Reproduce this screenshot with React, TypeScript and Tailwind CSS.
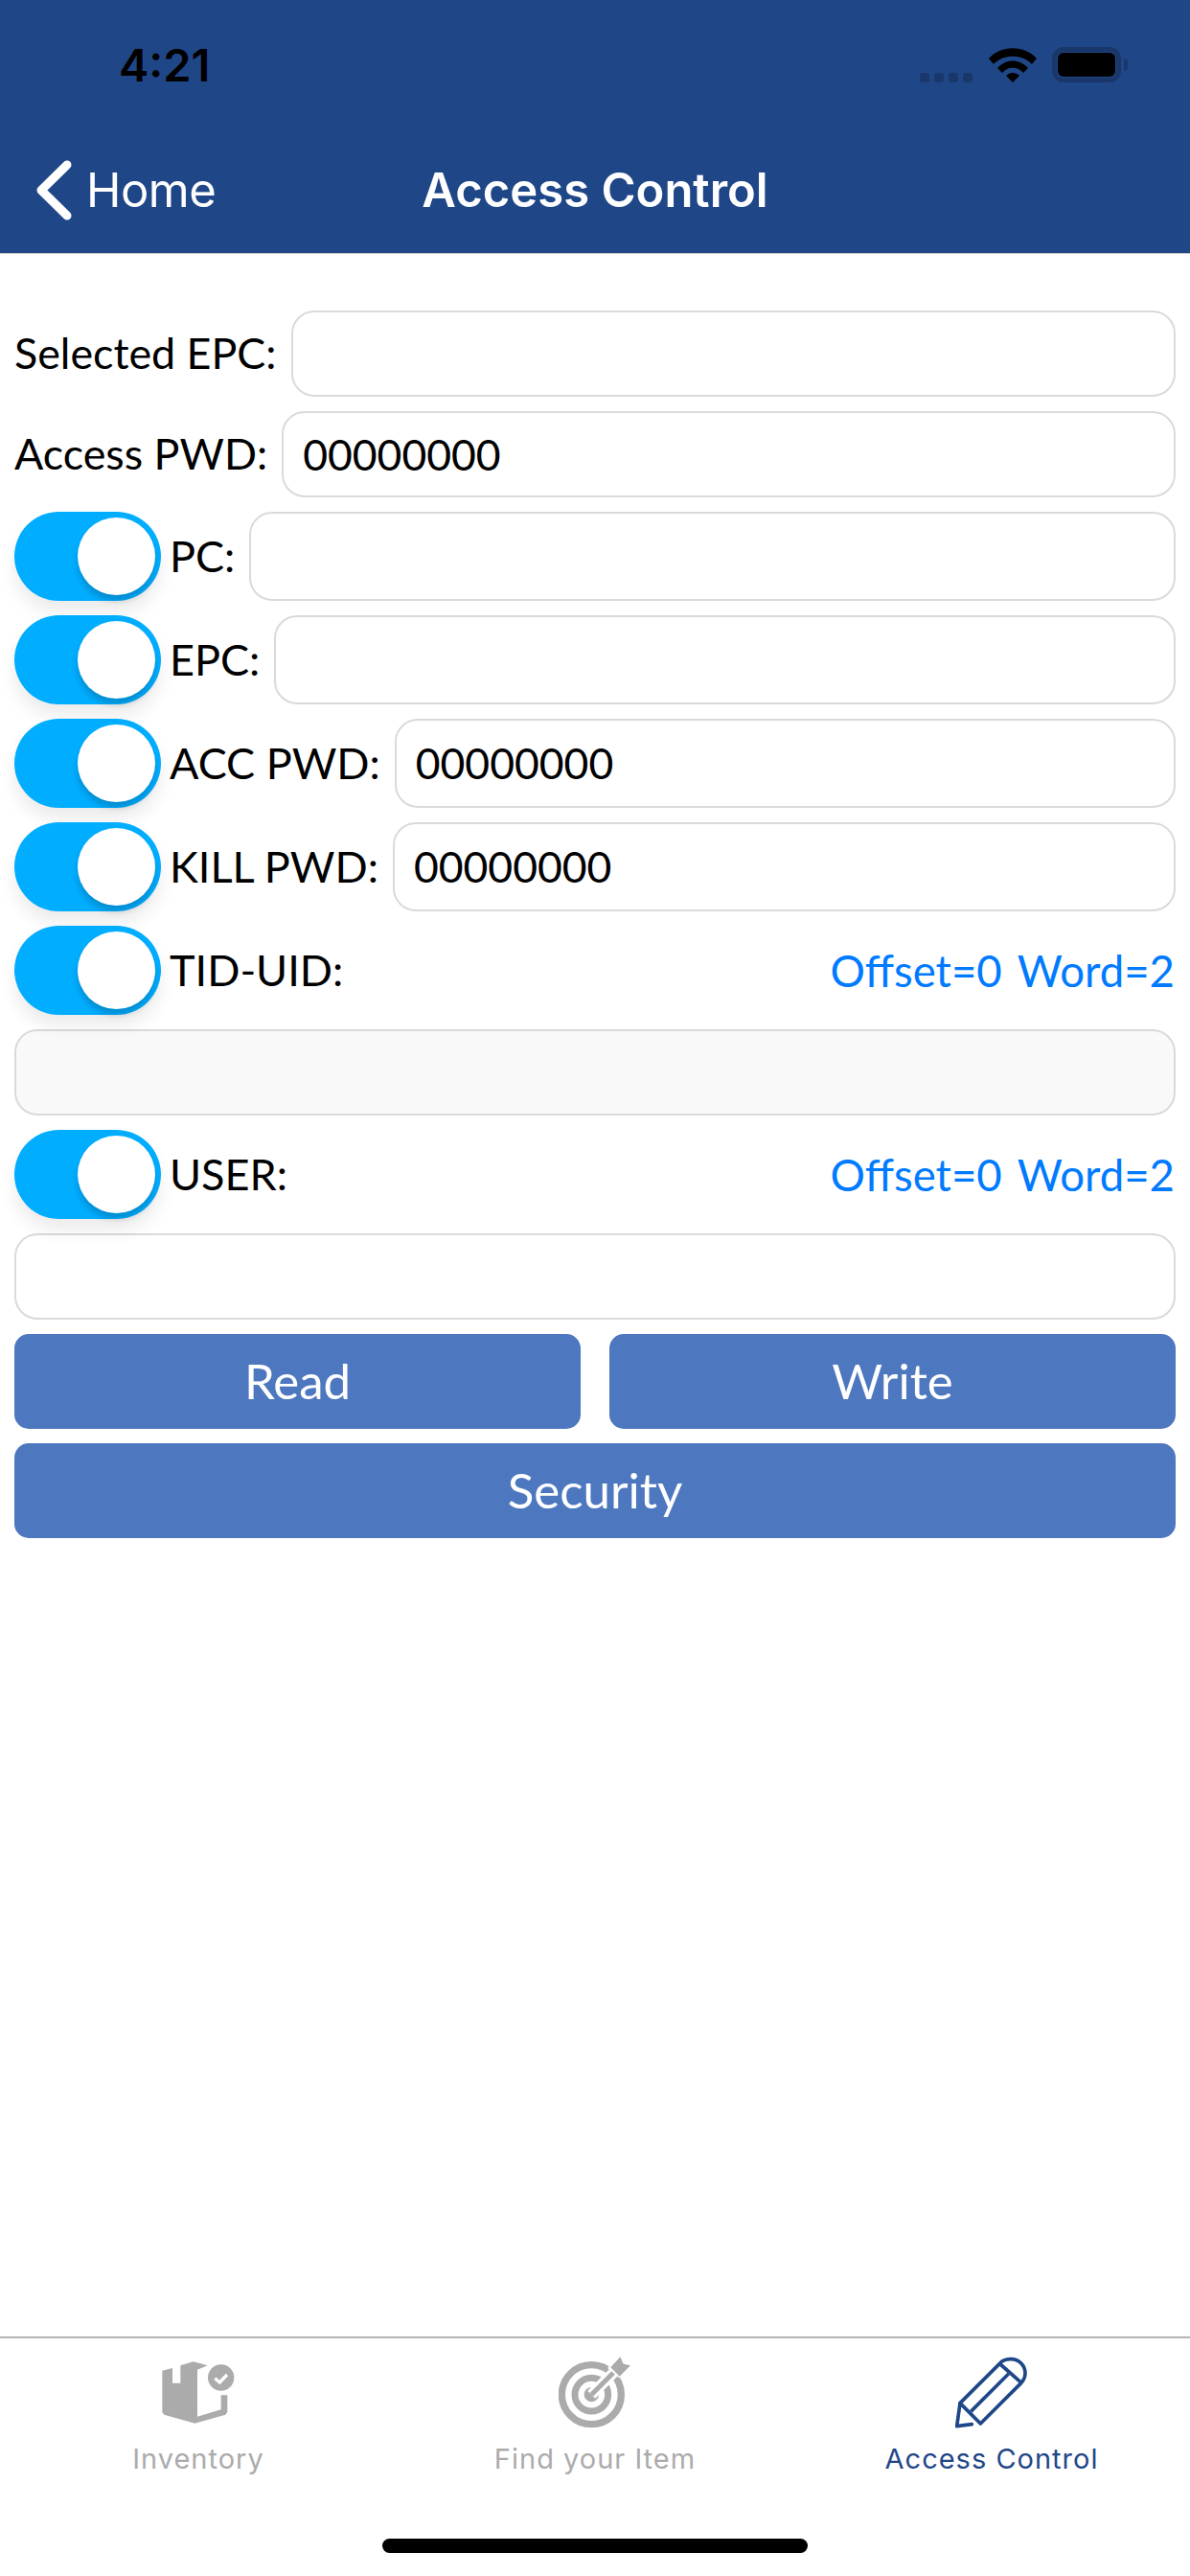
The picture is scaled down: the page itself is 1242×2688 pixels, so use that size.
const ui = '"Inter", "Liberation Sans", sans-serif';

function Toggle() {
  return (
    <div className="relative h-[93px] w-[153px] shrink-0 rounded-full bg-[#00adff] shadow-[0_12px_18px_rgba(0,0,0,0.08)]">
      <div className="absolute left-[66px] top-[6px] h-[81px] w-[81px] rounded-full bg-white shadow-[0_6px_6px_rgba(0,0,0,0.18)]" />
    </div>
  );
}

function Field({ value = "", disabled = false, tall = false }: { value?: string; disabled?: boolean; tall?: boolean }) {
  return (
    <input
      readOnly
      value={value}
      className={`${tall ? "h-[93px]" : "h-[90px]"} ${disabled ? "bg-[#f9f9f9]" : "bg-white"} w-full min-w-0 shrink-0 rounded-[24px] border-2 border-[#dadada] px-[20px] pb-[2px] text-[44.5px] text-black outline-none`}
    />
  );
}

function LabelRow({ label, value }: { label: string; value?: string }) {
  return (
    <div className="flex items-center">
      <span className="mr-[15px] shrink-0 pb-[2px] text-[44.8px] leading-none text-black">{label}</span>
      <div className="min-w-0 flex-1">
        <Field value={value} />
      </div>
    </div>
  );
}

function ToggleRow({ label, value }: { label: string; value?: string }) {
  return (
    <div className="flex items-center">
      <Toggle />
      <span className="ml-[9px] mr-[15px] shrink-0 text-[45px] leading-none text-black">{label}</span>
      <div className="min-w-0 flex-1">
        <Field value={value} tall />
      </div>
    </div>
  );
}

function OffsetRow({ label }: { label: string }) {
  return (
    <div className="flex items-center">
      <Toggle />
      <span className="ml-[9px] text-[45px] leading-none text-black">{label}</span>
      <div className="ml-auto flex gap-[16px] pr-[1px] text-[45.5px] leading-none text-[#007aff]">
        <span>Offset=0</span>
        <span>Word=2</span>
      </div>
    </div>
  );
}

function ActionButton({ label }: { label: string }) {
  return (
    <button className="h-[99px] flex-1 rounded-[15px] bg-[#4d77bf] text-center text-[51px] text-white">
      {label}
    </button>
  );
}

function BoxIcon() {
  return (
    <svg viewBox="207 81 228 228" className="h-[76px] w-[76px]" fill="#ababab">
      <path d="M208 128 L240 120 V167 H265 V112 L305 100 L350 112 L318 125 V272 L392 250 V205 H412 V258 L406 266 L310 293 L214 266 L208 258 Z" />
      <circle cx="392" cy="150" r="41" />
      <path d="M373 152 L388 165 L411 141" fill="none" stroke="#fff" strokeWidth="10" />
    </svg>
  );
}

function TargetIcon() {
  return (
    <svg viewBox="159 81 228 228" className="h-[76px] w-[76px]">
      <circle cx="262" cy="203" r="93" fill="none" stroke="#ababab" strokeWidth="22" />
      <circle cx="262" cy="203" r="52" fill="none" stroke="#ababab" strokeWidth="21" />
      <circle cx="262" cy="203" r="23" fill="#ababab" />
      <path d="M262 203 L340 125" stroke="#fff" strokeWidth="34" />
      <path d="M262 203 L340 125" stroke="#ababab" strokeWidth="15" />
      <path d="M318 120 L352 85 L362 107 L384 112 L350 146 Z" fill="#fff" stroke="#fff" strokeWidth="8" />
      <path d="M322 118 L352 85 L362 107 L384 112 L350 146 Z" fill="#ababab" />
    </svg>
  );
}

function PencilIcon() {
  return (
    <svg viewBox="111 81 228 228" className="h-[76px] w-[76px]" fill="none" stroke="#1f4788" strokeWidth="11" strokeLinejoin="round">
      <path d="M126 230 L250 106 C265 88 300 86 318 106 C334 124 334 148 318 166 L190 294 Z" />
      <path d="M252 108 L318 166" />
      <path d="M278 138 L160 256" />
      <path d="M126 230 L116 302 L163 296" strokeLinecap="round" />
    </svg>
  );
}

function Tab({ label, active, children }: { label: string; active?: boolean; children: React.ReactNode }) {
  return (
    <div className="flex flex-1 flex-col items-center pt-[18px]">
      {children}
      <span className={`mt-[15px] text-[29px] leading-[34px] tracking-[1px] ${active ? "text-[#1f4788]" : "text-[#ababab]"}`}>
        {label}
      </span>
    </div>
  );
}

function SignalDot() {
  return <span className="h-[10px] w-[10px] rounded-[3px] bg-[#19376a]" />;
}

export default function App() {
  return (
    <div className="flex h-[2688px] w-[1242px] flex-col bg-white" style={{ fontFamily: '"Lato", sans-serif' }}>
      {/* Header */}
      <header className="h-[264px] shrink-0 bg-[#1f4788]" style={{ fontFamily: ui }}>
        <div className="flex h-[132px] items-center justify-between pl-[124px] pr-[72px] pt-[3px]">
          <span className="text-[47px] font-semibold leading-none text-black">4:21</span>
          <div className="flex items-center">
            <div className="mr-[17px] mt-[26px] flex gap-[5px]">
              <SignalDot />
              <SignalDot />
              <SignalDot />
              <SignalDot />
            </div>
            <svg viewBox="0 0 50 36" className="mr-[16px] h-[36px] w-[50px]" fill="black">
              <path d="M0 11 C13 -3.5 37 -3.5 50 11 L45 17 C35 6 15 6 5 17 Z" />
              <path d="M9 21 C18 11 32 11 41 21 L36 26 C30 19 20 19 14 26 Z" />
              <path d="M18 29 C22 25 28 25 32 29 L25 36 Z" />
            </svg>
            <div className="relative h-[37px] w-[72px] rounded-[12px] border-[5px] border-[#19376a] p-[1px]">
              <div className="h-full w-full rounded-[6px] bg-black" />
              <span className="absolute -right-[12px] top-[7px] h-[13px] w-[4px] rounded-r-full bg-[#19376a]" />
            </div>
          </div>
        </div>
        <div className="grid h-[132px] grid-cols-[1fr_auto_1fr] items-center">
          <div className="flex items-center pl-[38px]">
            <svg viewBox="0 0 37 63" className="h-[63px] w-[37px]" fill="none" stroke="white" strokeWidth="9" strokeLinecap="round" strokeLinejoin="round">
              <path d="M32 5 L5 31.5 L32 58" />
            </svg>
            <span className="ml-[15px] text-[49px] leading-none tracking-[-0.5px] text-white">Home</span>
          </div>
          <span className="text-[49px] font-semibold leading-none text-white">Access Control</span>
          <div />
        </div>
      </header>
      <div className="h-[1px] shrink-0 bg-[#c8c8c8]" />

      {/* Form */}
      <main className="flex flex-1 flex-col gap-[15px] px-[15px] pt-[59px]">
        <LabelRow label="Selected EPC:" />
        <LabelRow label="Access PWD:" value="00000000" />
        <ToggleRow label="PC:" />
        <ToggleRow label="EPC:" />
        <ToggleRow label="ACC PWD:" value="00000000" />
        <ToggleRow label="KILL PWD:" value="00000000" />
        <OffsetRow label="TID-UID:" />
        <Field disabled />
        <OffsetRow label="USER:" />
        <Field />
        <div className="flex gap-[30px]">
          <ActionButton label="Read" />
          <ActionButton label="Write" />
        </div>
        <div className="flex">
          <ActionButton label="Security" />
        </div>
      </main>

      {/* Tab bar */}
      <footer className="relative h-[250px] shrink-0 border-t-2 border-[#b4b4b4]" style={{ fontFamily: ui }}>
        <div className="flex">
          <Tab label="Inventory"><BoxIcon /></Tab>
          <Tab label="Find your Item"><TargetIcon /></Tab>
          <Tab label="Access Control" active><PencilIcon /></Tab>
        </div>
        <div className="absolute bottom-[24px] left-[399px] h-[15px] w-[444px] rounded-full bg-black" />
      </footer>
    </div>
  );
}
